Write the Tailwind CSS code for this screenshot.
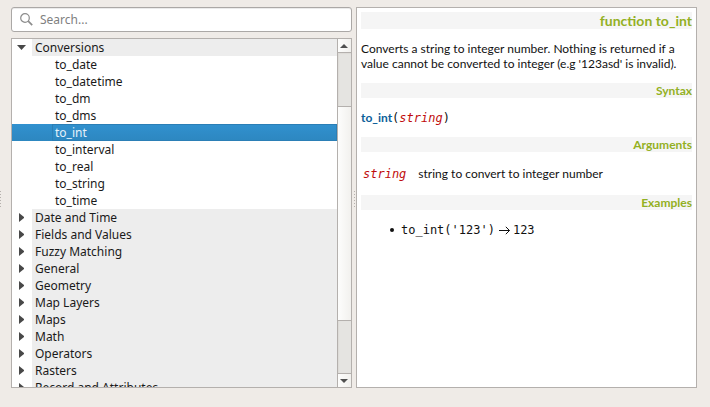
<!DOCTYPE html>
<html lang="en">
<head>
<meta charset="utf-8">
<title>Function help</title>
<script src="https://cdn.jsdelivr.net/npm/@tailwindcss/browser@4"></script>
</head>
<body class="w-[710px] h-[407px] overflow-hidden bg-[#efebe7]">
<div class="flex h-full pt-[7px]">
  <div class="w-[11px] shrink-0 pt-[184px]">
    <div class="w-px h-[17px] bg-[repeating-linear-gradient(to_bottom,#b5b1ad_0_1px,transparent_1px_3px)]"></div>
  </div>
  <div class="w-[341px] shrink-0 flex flex-col gap-[6px] font-['Noto_Sans',sans-serif] text-[12px] leading-[17px] text-[#1a1a1a]">
    <label class="h-[25px] flex items-center rounded-[3px] border border-[#aba8a6] bg-white shadow-[inset_0_1px_0_#ebebeb] pl-[8px]">
      <svg class="size-[13px] shrink-0" viewBox="0 0 13 13" fill="none" stroke="#8c8c8c"><circle cx="5" cy="5" r="4.3" stroke-width="1.2"/><path d="M8.2 8.2 12.2 12.2" stroke-width="1.7"/></svg>
      <span class="ml-[7px] text-[#808080]">Search...</span>
    </label>
    <div class="h-[350px] flex border border-[#b4b0ad] bg-white overflow-hidden">
      <ul id="tree" class="w-[325px] shrink-0 overflow-hidden whitespace-pre"></ul>
      <div class="w-[15px] h-[348px] shrink-0 flex flex-col border-l border-[#b4b0ad] bg-[#e5e4e1]">
        <div class="h-[14px] shrink-0 border-b border-[#b4b0ad] bg-linear-to-r from-[#fdfdfc] to-[#f1f0ed] flex items-center justify-center">
          <svg class="w-[8px] h-[4px] -ml-[2px] mt-px" viewBox="0 0 8 4"><path d="M0 4 4 0 8 4Z" fill="#505050"/></svg>
        </div>
        <div class="h-[53px] shrink-0 shadow-[inset_1px_1px_1px_#dddbd8]"></div>
        <div class="h-[215px] shrink-0 border-y border-[#b4b0ad] bg-linear-to-r from-[#fdfdfc] to-[#f1f0ed]"></div>
        <div class="h-[52px] shrink-0 shadow-[inset_1px_0_1px_#dddbd8]"></div>
        <div class="h-[14px] shrink-0 border-t border-[#b4b0ad] bg-linear-to-r from-[#fdfdfc] to-[#f1f0ed] flex items-center justify-center">
          <svg class="w-[8px] h-[4px] -ml-[2px]" viewBox="0 0 8 4"><path d="M0 0 4 4 8 0Z" fill="#505050"/></svg>
        </div>
      </div>
    </div>
  </div>
  <div class="w-[4px] shrink-0 pt-[184px] pl-[2px]">
    <div class="w-px h-[17px] bg-[repeating-linear-gradient(to_bottom,#b5b1ad_0_1px,transparent_1px_3px)]"></div>
  </div>
  <article class="w-[341px] h-[381px] shrink-0 border border-[#b4b0ad] bg-white p-[4px] font-['Lato',sans-serif] text-[12px] leading-[15px] text-[#111]">
    <h1 class="h-[17px] leading-[18px] bg-[#f5f5f5] text-right text-[14px] font-bold text-[#93b023]">function to_int</h1>
    <p class="mt-[12px] h-[30px] whitespace-nowrap">Converts a string to integer number. Nothing is returned if a<br>value cannot be converted to integer (e.g '123asd' is invalid).</p>
    <h2 class="mt-[12px] h-[15px] bg-[#f5f5f5] text-right font-bold text-[#93b023]">Syntax</h2>
    <div class="mt-[12px] h-[15px] font-['DejaVu_Sans_Mono',monospace] whitespace-nowrap"><span class="font-['Lato',sans-serif] font-bold text-[#0a6099]">to_int</span>(<span class="italic text-[#bf0c0c]">string</span>)</div>
    <h2 class="mt-[12px] h-[15px] bg-[#f5f5f5] text-right font-bold text-[#93b023]">Arguments</h2>
    <div class="mt-[14px] h-[15px] pl-[2px] flex items-baseline gap-[12px] whitespace-nowrap"><span class="font-['DejaVu_Sans_Mono',monospace] italic text-[#bf0c0c]">string</span><span>string to convert to integer number</span></div>
    <h2 class="mt-[14px] h-[15px] bg-[#f5f5f5] text-right font-bold text-[#93b023]">Examples</h2>
    <ul class="mt-[13px] pl-[29px] font-['DejaVu_Sans_Mono',monospace]">
      <li class="flex items-center whitespace-pre"><span class="size-[4px] rounded-full bg-[#111] mr-[7px] mb-[2px]"></span><span>to_int('123')</span><svg class="w-[11px] h-[9px] ml-[4px] mr-[3px]" viewBox="0 0 11 9" fill="none" stroke="#111"><path d="M0 4.5H10.5M6.8 .8 10.5 4.5 6.8 8.2"/></svg><span>123</span></li>
    </ul>
  </article>
</div>
<script>
const children = ['to_date','to_datetime','to_dm','to_dms','to_int','to_interval','to_real','to_string','to_time'];
const groups = ['Date and Time','Fields and Values','Fuzzy Matching','General','Geometry','Map Layers','Maps','Math','Operators','Rasters','Record and Attributes'];
const group = (name, open) => `<li class="flex h-[17px]"><span class="w-[20px] shrink-0 flex items-center pl-[5px]">${open
  ? '<svg class="w-[9px] h-[5px]" viewBox="0 0 9 5"><path d="M0 0H9L4.5 5Z" fill="#484848"/></svg>'
  : '<svg class="w-[5px] h-[9px] ml-[2px]" viewBox="0 0 5 9"><path d="M0 0V9L5 5V4Z" fill="#484848"/></svg>'}</span><span class="flex-1 bg-[#ededed] pl-[3px]">${name}</span></li>`;
const leaf = name => name === 'to_int'
  ? `<li class="flex h-[17px] pl-[40px] bg-linear-to-b from-[#3191cf] to-[#2d87c0] text-[#e4f1fa]"><span class="flex-1 border border-[#2b7fb6] pl-[2px] leading-[15px]">${name}</span></li>`
  : `<li class="h-[17px] pl-[43px]">${name}</li>`;
document.getElementById('tree').innerHTML = group('Conversions', true) + children.map(leaf).join('') + groups.map(g => group(g, false)).join('');
</script>
</body>
</html>
